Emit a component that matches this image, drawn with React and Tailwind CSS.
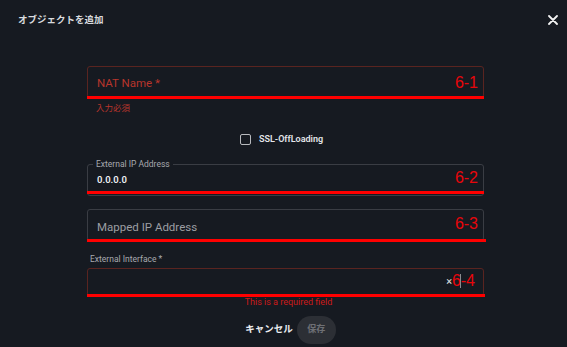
import React from "react";

const F = { fontFamily: 'Roboto, "Noto Sans CJK JP", sans-serif' };
const A = { fontFamily: '"Liberation Sans", Arial, sans-serif' };

function RedLine({ className }) {
  return <div className={"absolute h-[3px] bg-[#ff0000] " + className} />;
}
function Tag({ children, className }) {
  return (
    <span style={A} className={"absolute text-[16px] leading-none text-[#e8060b] " + className}>
      {children}
    </span>
  );
}

export default function App() {
  return (
    <div style={F} className="relative w-[567px] h-[347px] bg-[#161a21] overflow-hidden">
      <div className="flex items-center justify-between h-[40px] pl-[18px] pr-[9px]">
        <span className="text-[9.5px] font-semibold text-[#d8dade]">オブジェクトを追加</span>
        <svg width="10" height="10" viewBox="0 0 10 10">
          <path d="M1 1L9 9M9 1L1 9" stroke="#f2f2f2" strokeWidth="1.8" strokeLinecap="round" />
        </svg>
      </div>

      <div className="ml-[87px] w-[397px] flex flex-col">
        {/* Field 1 */}
        <div className="relative mt-[26px] h-[32px] rounded-[3px] border border-[#5a2420] flex items-center pl-[9px] pt-[3px]">
          <span className="text-[11.5px] text-[#b8352c]">NAT Name *</span>
          <RedLine className="-left-[1px] -right-[1px] -bottom-[2px]" />
          <Tag className="right-[5px] top-[8px]">6-1</Tag>
        </div>
        <div className="mt-[4px] pl-[9px] text-[8.5px] leading-[12px] text-[#b8352c]">入力必須</div>

        {/* Checkbox */}
        <div className="mt-[19px] flex items-center gap-[8px] pl-[153px]">
          <div className="w-[11px] h-[11px] rounded-[2px] border-[1.5px] border-[#b8babe]" />
          <span className="text-[9px] font-semibold text-[#e4e6ea]">SSL-OffLoading</span>
        </div>

        {/* Field 2 */}
        <div className="relative mt-[17px] h-[32px] rounded-[3px] border border-[#3a3d44] flex items-center pl-[9px] pt-[1px]">
          <span className="absolute -top-[6px] left-[5px] px-[3px] bg-[#161a21] text-[8.5px] leading-[10px] text-[#a7a9ae]">
            External IP Address
          </span>
          <span className="text-[9.5px] font-semibold text-[#eceef2]">0.0.0.0</span>
          <RedLine className="-left-[1px] -right-[1px] bottom-[1px]" />
          <Tag className="right-[5px] top-[5px]">6-2</Tag>
        </div>

        {/* Field 3 */}
        <div className="relative mt-[13px] h-[32px] rounded-[3px] border border-[#3a3d44] flex items-center pl-[9px] pt-[6px]">
          <span className="text-[11.5px] text-[#9c9ea3]">Mapped IP Address</span>
          <RedLine className="-left-[1px] -right-[3px] -bottom-[2px]" />
          <Tag className="right-[5px] top-[6px]">6-3</Tag>
        </div>

        {/* Field 4 */}
        <div className="mt-[12px] pl-[3px] text-[8.5px] leading-[12px] text-[#a7a9ae]">External Interface *</div>
        <div className="relative mt-[3px] h-[28px] rounded-[3px] border border-[#5a2420] flex items-center justify-end pr-[31px]">
          <span className="text-[11px] leading-none text-[#e0e0e0]">×</span>
          <Tag className="right-[8px] top-[4px]">6-4</Tag>
          <div className="absolute right-[22px] top-[5px] w-[1px] h-[14px] bg-[#8a8c90]" />
          <RedLine className="-left-[1px] -right-[2px] -bottom-[2px]" />
        </div>
        <div className="mt-[0px] text-center pl-[6px] text-[9px] leading-[12px] text-[#cc1a1a]">
          This is a required field
        </div>

        {/* Buttons */}
        <div className="mt-[8px] flex items-center justify-center gap-[4px] pl-[10px]">
          <span className="text-[9.5px] font-semibold text-[#eceef2]">キャンセル</span>
          <div className="w-[39px] h-[28px] rounded-full bg-[#2c2f35] flex items-center justify-center">
            <span className="text-[9px] text-[#6e7075] font-semibold">保存</span>
          </div>
        </div>
      </div>
    </div>
  );
}
